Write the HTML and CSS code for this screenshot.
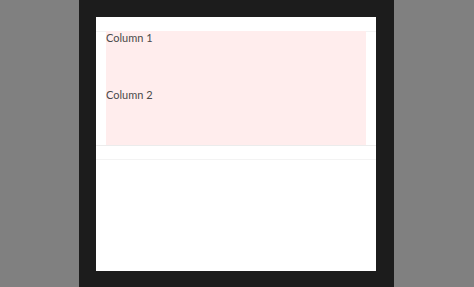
FILE: index.html
```html
<!DOCTYPE html>
<html lang="en">
<head>
    <meta charset="UTF-8">
    <title>Columns</title>
    <link rel="stylesheet" href="styles.css">
</head>
<body>
    <div class="frame">
        <div class="page">
            <div class="grid-wrap">
                <div class="columns">
                    <div class="column">Column 1</div>
                    <div class="column">Column 2</div>
                </div>
            </div>
            <div class="scroll-strip"></div>
        </div>
    </div>
</body>
</html>
```
FILE: styles.css
```css
html, body {
    height: 100%;
}

body {
    margin: 0;
    background: #808080;
    font-family: Lato, "Open Sans", sans-serif;
    display: flex;
    justify-content: center;
}

.frame {
    width: 315px;
    height: 100%;
    box-sizing: border-box;
    background: #1c1c1c;
    padding: 17px 18px 16px 17px;
    margin-left: -1px;
    display: flex;
}

.page {
    flex: 1;
    background: #fff;
    display: flex;
    flex-direction: column;
}

.grid-wrap {
    margin-top: 14px;
    padding: 0 10px;
    border-top: 1px solid #f3f3f3;
    border-bottom: 1px solid #ececec;
}

.columns {
    background: #ffeded;
    margin-top: -1px;
}

.column {
    height: 57px;
    font-size: 11px;
    line-height: 14px;
    color: #4a4a4a;
    box-sizing: border-box;
}

.scroll-strip {
    height: 13px;
    border-bottom: 1px solid #f3f3f3;
}
```
